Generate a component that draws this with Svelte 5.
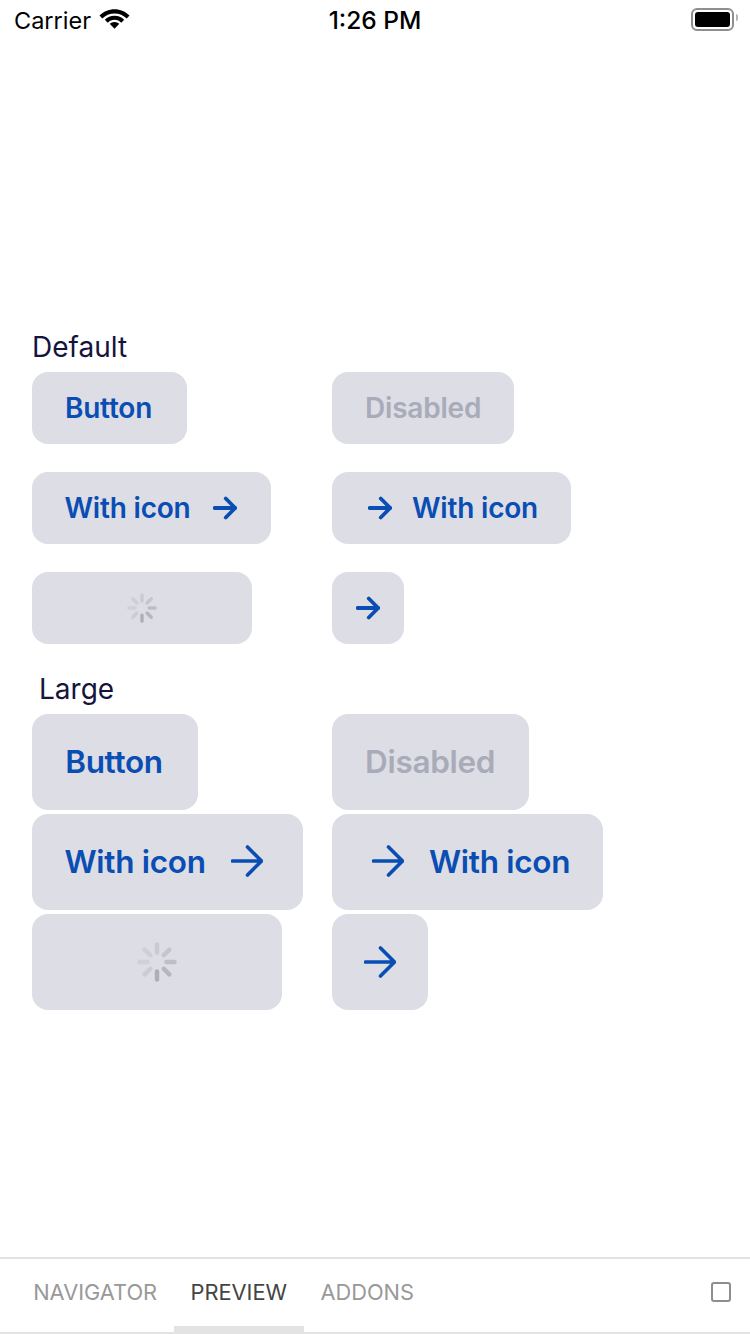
<script lang="ts">
  const spokes = [
    { angle: 180, opacity: 0.95 },
    { angle: 135, opacity: 0.78 },
    { angle: 90, opacity: 0.62 },
    { angle: 45, opacity: 0.48 },
    { angle: 0, opacity: 0.38 },
    { angle: 315, opacity: 0.3 },
    { angle: 270, opacity: 0.25 },
    { angle: 225, opacity: 0.32 }
  ];
  const tabs = ['NAVIGATOR', 'PREVIEW', 'ADDONS'];
  const active = 'PREVIEW';
</script>

{#snippet arrow()}
  <svg class="arrow" viewBox="0 0 24 24" fill="none" stroke="currentColor" stroke-linecap="round" stroke-linejoin="round">
    <path d="M1.75 12H22.25M12.75 2.5L22.25 12L12.75 21.5" />
  </svg>
{/snippet}

{#snippet arrowLarge()}
  <svg class="arrow-lg" viewBox="0 0 32 32" fill="none" stroke="currentColor" stroke-linecap="round" stroke-linejoin="round">
    <path d="M1.5 16H30.5M16.5 2L30.5 16L16.5 30" />
  </svg>
{/snippet}

{#snippet spinner(cls: string)}
  <svg class={cls} viewBox="0 0 40 40" fill="none" stroke="#a9abb9" stroke-linecap="round">
    {#each spokes as s}
      <line x1="20" y1="2.5" x2="20" y2="10.5" stroke-width="4.4" opacity={s.opacity} transform="rotate({s.angle} 20 20)" />
    {/each}
  </svg>
{/snippet}

<div class="screen">
  <header class="status">
    <div class="status-left">
      <span>Carrier</span>
      <svg class="wifi" viewBox="0 0 32 24" fill="#000">
        <path d="M16 2C22 2 27.5 4.5 31.5 8.5L28.6 11.6C25.3 8.3 20.9 6.4 16 6.4S6.7 8.3 3.4 11.6L.5 8.5C4.5 4.5 10 2 16 2Z" />
        <path d="M16 8.6C19.9 8.6 23.4 10.1 26 12.7L23 15.8C21.2 14 18.7 12.9 16 12.9S10.8 14 9 15.8L6 12.7C8.6 10.1 12.1 8.6 16 8.6Z" />
        <path d="M16 15C18 15 19.7 15.8 21 17L16 22L11 17C12.3 15.8 14 15 16 15Z" />
      </svg>
    </div>
    <div class="clock">1:26 PM</div>
    <div class="battery"><div class="battery-fill"></div></div>
  </header>

  <main class="content">
    <p class="label">Default</p>
    <div class="grid">
      <button class="btn plain">Button</button>
      <button class="btn disabled">Disabled</button>
      <button class="btn icon-right">With icon {@render arrow()}</button>
      <button class="btn icon-left">{@render arrow()} With icon</button>
      <button class="btn loading">{@render spinner('spin')}</button>
      <button class="btn only">{@render arrow()}</button>
    </div>

    <p class="label label-large">Large</p>
    <div class="grid grid-large">
      <button class="btn lg plain">Button</button>
      <button class="btn lg disabled">Disabled</button>
      <button class="btn lg icon-right">With icon {@render arrowLarge()}</button>
      <button class="btn lg icon-left">{@render arrowLarge()} With icon</button>
      <button class="btn lg loading">{@render spinner('spin')}</button>
      <button class="btn lg only">{@render arrowLarge()}</button>
    </div>
  </main>

  <nav class="tabbar">
    {#each tabs as tab}
      <div class="tab" class:active={tab === active}>{tab}</div>
    {/each}
    <div class="check"></div>
  </nav>
</div>

<style>
  :global(body) {
    margin: 0;
    background: #fff;
  }

  .screen {
    width: 750px;
    height: 1334px;
    display: flex;
    flex-direction: column;
    font-family: Inter, "Liberation Sans", sans-serif;
    overflow: hidden;
  }

  .status {
    height: 40px;
    display: flex;
    align-items: center;
    justify-content: space-between;
    padding: 0 16px 0 14px;
    font-size: 23.5px;
    color: #000;
    position: relative;
    flex: none;
  }

  .status-left {
    display: flex;
    align-items: center;
    gap: 8px;
  }

  .wifi {
    width: 31px;
    height: 24px;
    margin-top: -2px;
  }

  .clock {
    position: absolute;
    left: 0;
    right: 0;
    text-align: center;
    font-size: 24.5px;
    font-weight: 500;
  }

  .battery {
    width: 35px;
    height: 15px;
    border: 2px solid #8f8f8f;
    border-radius: 6px;
    padding: 2px;
    margin-top: -2px;
    position: relative;
  }

  .battery::after {
    content: "";
    position: absolute;
    right: -6px;
    top: 4px;
    width: 2px;
    height: 7px;
    background: #b5b5b5;
    border-radius: 0 2px 2px 0;
  }

  .battery-fill {
    height: 100%;
    background: #000;
    border-radius: 3px;
  }

  .content {
    flex: 1;
    padding-top: 291px;
    padding-left: 32px;
  }

  .label {
    margin: 0 0 8px 0;
    font-size: 28px;
    line-height: 33px;
    color: #14143c;
  }

  .label-large {
    margin: 29px 0 8px 7px;
  }

  .grid {
    display: grid;
    grid-template-columns: 300px 300px;
    row-gap: 28px;
    justify-items: start;
  }

  .grid-large {
    row-gap: 4px;
  }

  .btn {
    height: 72px;
    padding: 0 33px 1px;
    border: 0;
    border-radius: 16px;
    background: #dcdde5;
    color: #0a4db3;
    font-family: inherit;
    font-size: 28px;
    font-weight: 600;
    letter-spacing: -0.2px;
    display: flex;
    align-items: center;
    gap: 22px;
    white-space: nowrap;
  }

  .btn.plain {
    width: 155px;
    padding: 0 2px 0 0;
    justify-content: center;
  }

  .btn.icon-right {
    padding-left: 32.5px;
    padding-right: 34.5px;
  }

  .btn.icon-left {
    padding-left: 36px;
    gap: 20px;
  }

  .btn.lg {
    height: 96px;
    padding-bottom: 2px;
    font-size: 31.5px;
    letter-spacing: -0.3px;
    gap: 25px;
  }

  .btn.lg.plain {
    width: 166px;
    padding-right: 2px;
  }

  .btn.lg.disabled {
    padding-right: 34px;
  }

  .btn.lg.icon-right {
    padding-right: 40px;
  }

  .btn.lg.icon-left {
    padding-left: 40px;
    gap: 25px;
  }

  .disabled {
    color: #a9abb9;
  }

  .btn.loading {
    width: 220px;
    padding: 0;
    justify-content: center;
  }

  .btn.lg.loading {
    width: 250px;
    padding: 0;
  }

  .btn.only {
    width: 72px;
    padding: 0;
    justify-content: center;
  }

  .btn.lg.only {
    width: 96px;
    padding: 0;
  }

  .arrow {
    width: 24px;
    height: 24px;
    stroke-width: 3.8;
    flex: none;
  }

  .arrow-lg {
    width: 32px;
    height: 32px;
    stroke-width: 3.6;
    flex: none;
  }

  .spin {
    width: 30px;
    height: 30px;
  }

  .lg .spin {
    width: 40px;
    height: 40px;
  }

  .tabbar {
    flex: none;
    height: 73px;
    border-top: 2px solid #e3e3e3;
    border-bottom: 2px solid #e3e3e3;
    display: flex;
    padding-left: 16.5px;
    align-items: stretch;
  }

  .tab {
    padding: 0 16.7px 1px;
    display: flex;
    align-items: center;
    font-size: 21.8px;
    color: #999;
    border-bottom: 6px solid transparent;
  }

  .tab.active {
    color: #444;
    border-bottom-color: #e3e3e3;
  }

  .check {
    width: 16px;
    height: 16px;
    border: 2px solid #8e8e8e;
    border-radius: 3px;
    margin: 23px 19px 0 auto;
  }
</style>
